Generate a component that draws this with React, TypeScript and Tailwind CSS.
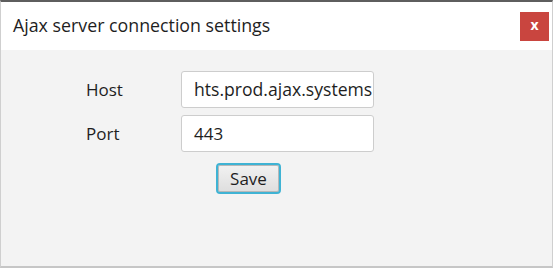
export default function App() {
  return (
    <div className="flex h-[268px] w-[553px] flex-col border-x border-t-2 border-b-2 border-x-[#cfcfcf] border-t-[#5e5e5e] border-b-[#c6c6c6] bg-[#f3f3f3] font-['Open_Sans',sans-serif] text-[#1e1e1e]">
      {/* Title bar */}
      <div className="flex h-[48px] shrink-0 items-center justify-between bg-white pl-[12px] pr-[3px]">
        <span className="text-[17.8px] leading-none">Ajax server connection settings</span>
        <button className="flex h-[29px] w-[29px] items-center justify-center bg-[#c9453f] pb-[2px] text-[14px] font-bold leading-none text-white">
          x
        </button>
      </div>

      {/* Form */}
      <div className="flex flex-col pl-[85px] pt-[21px]">
        <div className="grid grid-cols-[95px_193px] gap-y-[7px]">
          <label className="flex items-center text-[17px]">Host</label>
          <div className="flex h-[37px] items-center overflow-hidden rounded-[3px] border border-[#cdcdcd] bg-white pl-[12px] text-[17.6px] whitespace-nowrap">
            hts.prod.ajax.systems
          </div>
          <label className="flex items-center text-[17px]">Port</label>
          <div className="flex h-[37px] items-center rounded-[3px] border border-[#cdcdcd] bg-white pl-[12px] text-[17px]">
            443
          </div>
        </div>
        <div className="mt-[11px] pl-[130px]">
          <button className="flex h-[31px] w-[65px] items-center justify-center rounded-[4px] border-2 border-[#3fb3d4] bg-gradient-to-b from-[#f2f2f2] to-[#dedede] text-[17px] shadow-[inset_0_0_0_1px_#b8b8b8]">
            Save
          </button>
        </div>
      </div>
    </div>
  );
}
